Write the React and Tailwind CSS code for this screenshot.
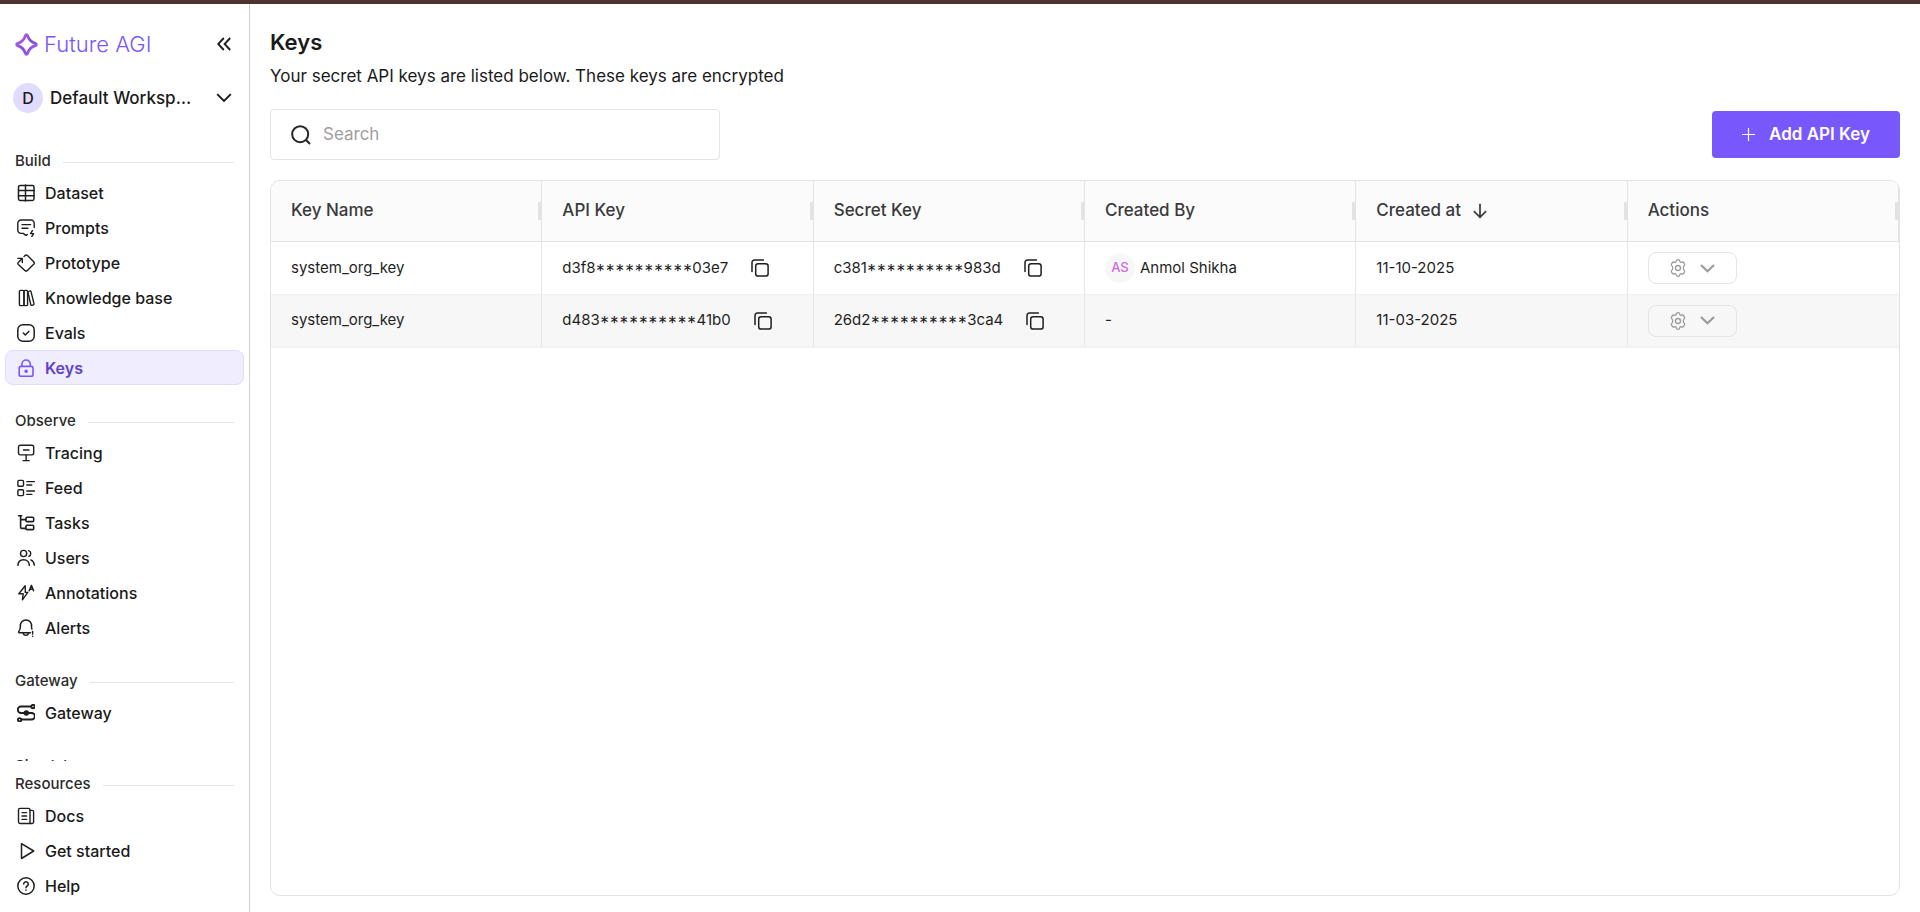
import { useState } from "react";

function Icon({ size = 18, stroke = 1.3, className = "", children }) {
  return (
    <svg
      aria-hidden="true"
      width={size}
      height={size}
      viewBox="0 0 18 18"
      fill="none"
      stroke="currentColor"
      strokeWidth={stroke}
      strokeLinecap="round"
      strokeLinejoin="round"
      className={`shrink-0 ${className}`}
    >
      {children}
    </svg>
  );
}

const icons = {
  dataset: (
    <Icon stroke={1.5}>
      <rect x="1.500" y="1.500" width="15.500" height="14.900" rx="1.600" />
      <path d="M8.500 .9v16M1.500 6.500H17M1.500 11.700H17" />
    </Icon>
  ),
  prompts: (
    <Icon stroke={1.400}>
      <path d="M17.2 8.5V4.2A3.2 3.2 0 0 0 14 1H4A3.2 3.2 0 0 0 .8 4.2v7A3.2 3.2 0 0 0 4 14.4h2.2l2.6 2 1.6-.8" />
      <path d="M5 5.6h8.6M5 9.2h6" />
      <path d="m15.4 11.6-1.8 3h3l-1.8 3" />
    </Icon>
  ),
  prototype: (
    <Icon stroke={1.400}>
      <path d="M7 2.600 8 1.500a1.800 1.800 0 0 1 2.500 0l6.200 6.300a1.800 1.800 0 0 1 0 2.500l-6.300 6.200a1.800 1.800 0 0 1-2.500 0L1.300 10.400a1.500 1.500 0 0 1 0-2L4.800 4.800" />
      <path d="M.9 4.400h4.400v4.200" />
    </Icon>
  ),
  knowledge: (
    <Icon stroke={1.400}>
      <rect x="2.400" y="1.400" width="4.600" height="15.200" rx="1.200" />
      <rect x="7" y="1.400" width="3.600" height="15.200" rx="1.200" />
      <path d="m10.900 3 1.800-1a.9.9 0 0 1 1.300.6l3 12.100a.9.9 0 0 1-.6 1.100l-1.400.5a.9.9 0 0 1-1.200-.7z" />
    </Icon>
  ),
  evals: (
    <Icon stroke={1.500}>
      <rect x="0.800" y="0.800" width="16.400" height="16.400" rx="5" />
      <path d="m6.300 9 2 2 3.500-3.600" />
    </Icon>
  ),
  keys: (
    <Icon stroke={1.600}>
      <rect x="2.200" y="7.400" width="13.800" height="9.800" rx="1.800" />
      <path d="M4.900 7.200V5.200a4.200 4.200 0 0 1 8.400 0v2" />
      <circle cx="9.100" cy="12.300" r="1" fill="currentColor" />
    </Icon>
  ),
  tracing: (
    <Icon stroke={1.400}>
      <rect x="1.500" y="1.300" width="15.200" height="9.600" rx="1.800" />
      <path d="M6.400 6h5.600M9.100 11.100v5.400M6 16.600h6.200" />
    </Icon>
  ),
  feed: (
    <Icon stroke={1.400}>
      <rect x="0.900" y="1.400" width="5.600" height="5.800" rx="1" />
      <rect x="0.900" y="10.800" width="5.600" height="5.800" rx="1" />
      <path d="M9.800 2.600h7.600M9.800 6h5M9.800 12h7.600M9.800 15.400h5" />
    </Icon>
  ),
  tasks: (
    <Icon stroke={1.600}>
      <path d="M1.500 1.800h3.200M3.600 1.800v11.400c0 .8.400 1.200 1.200 1.200h4M3.600 5.600h5.200" />
      <rect x="8.900" y="3.200" width="7.800" height="4.400" rx="1.200" />
      <rect x="8.900" y="11.200" width="7.800" height="4.400" rx="1.200" />
    </Icon>
  ),
  users: (
    <Icon stroke={1.400}>
      <circle cx="6.600" cy="4.500" r="3.100" />
      <path d="M.9 16.600c0-3.600 2.300-5.900 5.700-5.900s5.700 2.300 5.700 5.900" />
      <path d="M11.600 1.600a3 3 0 0 1 .2 5.700M13.800 10.900c2.100.8 3.300 2.800 3.500 5.200" />
    </Icon>
  ),
  annotations: (
    <Icon stroke={1.400}>
      <path d="M8.200 1.800 1.800 9.800h4.400l-.8 6 5.400-7.400H8.300z" />
      <path d="m12.200 6.800 2.200-5.400 2.200 5.400M13 5.300h2.800" strokeWidth="1.500" />
    </Icon>
  ),
  alerts: (
    <Icon stroke={1.500}>
      <path d="M13.400 13.800H2.600c-.8 0-1.100-.8-.7-1.400 1.100-1.500 1.500-2.700 1.500-5.200A5.500 5.500 0 0 1 9 1a5.500 5.500 0 0 1 5.500 6.200c0 1.300.1 2 .4 2.800" />
      <path d="M6.200 14.200a2.800 2.800 0 0 0 5.400 0M15.600 12.600v2.400M15.600 17.200v.100" />
    </Icon>
  ),
  gateway: (
    <Icon stroke={1.900}>
      <circle cx="16" cy="2.500" r="1.700" />
      <circle cx="2.600" cy="15.800" r="1.700" />
      <path d="M14.200 2.500H4a3.200 3.200 0 0 0 0 6.500h10.600a3.200 3.200 0 0 1 0 6.500H4.500" />
      <circle cx="9.300" cy="9" r="1.800" fill="currentColor" />
    </Icon>
  ),
  docs: (
    <Icon stroke={1.400}>
      <path d="M13 16.500H3.200a1.700 1.700 0 0 1-1.700-1.700V3a1.600 1.600 0 0 1 1.600-1.600h8.300A1.600 1.600 0 0 1 13 3z" />
      <path d="M13 3.400h2.200a1.400 1.400 0 0 1 1.400 1.400V15a1.500 1.500 0 0 1-1.500 1.500H13" />
      <path d="M5 5.600h4.600M5 9h4.600M5 12.400h4.600" />
    </Icon>
  ),
  start: (
    <Icon stroke={1.500}>
      <path d="M4.500 1.700v14.800L16.700 9z" />
    </Icon>
  ),
  help: (
    <Icon stroke={1.500}>
      <circle cx="9" cy="9" r="8.200" />
      <path d="M6.700 7a2.300 2.300 0 1 1 3.500 2c-.8.500-1.200.9-1.200 1.700M9 13.100v.100" />
    </Icon>
  ),
};

const sections = [
  {
    title: "Build",
    items: [
      ["Dataset", "dataset"],
      ["Prompts", "prompts"],
      ["Prototype", "prototype"],
      ["Knowledge base", "knowledge"],
      ["Evals", "evals"],
      ["Keys", "keys"],
    ],
  },
  {
    title: "Observe",
    items: [
      ["Tracing", "tracing"],
      ["Feed", "feed"],
      ["Tasks", "tasks"],
      ["Users", "users"],
      ["Annotations", "annotations"],
      ["Alerts", "alerts"],
    ],
  },
  { title: "Gateway", items: [["Gateway", "gateway"]] },
  { title: "Simulate", items: [] },
];

const resources = [
  ["Docs", "docs"],
  ["Get started", "start"],
  ["Help", "help"],
];

const rows = [
  {
    name: "system_org_key",
    api: "d3f8**********03e7",
    secret: "c381**********983d",
    by: "Anmol Shikha",
    initials: "AS",
    at: "11-10-2025",
  },
  {
    name: "system_org_key",
    api: "d483**********41b0",
    secret: "26d2**********3ca4",
    by: null,
    at: "11-03-2025",
  },
];

function SectionTitle({ children }) {
  return (
    <div className="flex items-center gap-3 px-[15px]">
      <h2 className="text-[15px] leading-[22px] font-medium text-[#2b2b2b]">{children}</h2>
      <span className="mt-0.5 h-px flex-1 bg-[#e4e4e6]" />
    </div>
  );
}

function NavItem({ label, icon, active }) {
  return (
    <li>
      <a
        href={`#${icon}`}
        aria-current={active ? "page" : undefined}
        className={`mx-[5px] flex h-[35px] items-center gap-2.5 rounded-lg border px-[11px] text-[16px] ${
          active
            ? "border-[#e1dbff] bg-[#f0edff] font-semibold text-[#5f43c8]"
            : "border-transparent font-medium text-[#1a1a1a]"
        }`}
      >
        <span className={active ? "flex text-[#7857fc]" : "flex text-[#1f1f1f]"}>{icons[icon]}</span>
        {label}
      </a>
    </li>
  );
}

function Sidebar() {
  return (
    <aside className="flex w-[250px] shrink-0 flex-col border-r border-[#cfcfd1]">
      <div className="flex items-center justify-between pt-6 pr-[18px] pl-[15px]">
        <a href="#home" className="flex items-center gap-1.5 text-[22px] leading-8 font-light text-[#7857fc]">
          <svg aria-hidden="true" width="23" height="23" viewBox="0 0 23 23" fill="none">
            <defs>
              <linearGradient id="spark" x1="0" y1="0" x2="1" y2="1">
                <stop offset="0" stopColor="#c56be0" />
                <stop offset="0.5" stopColor="#8448dc" />
                <stop offset="1" stopColor="#a566ea" />
              </linearGradient>
            </defs>
            <path
              d="M11.500 1.600c.5 0 .9.400 1.100 1 1.100 3.900 3.400 6.400 7.800 7.800 1.300.4 1.300 1.800 0 2.200-4.400 1.400-6.700 3.900-7.800 7.800-.2.600-.6 1-1.100 1s-.9-.4-1.100-1c-1.100-3.900-3.400-6.400-7.800-7.800-1.300-.4-1.300-1.800 0-2.200 4.400-1.400 6.700-3.900 7.800-7.800.2-.6.600-1 1.100-1z"
              stroke="url(#spark)"
              strokeWidth="2.800"
              strokeLinejoin="round"
            />
          </svg>
          Future AGI
        </a>
        <button type="button" aria-label="Collapse sidebar" className="text-[#1f1f1f]">
          <svg aria-hidden="true" width="14" height="14" viewBox="0 0 14 14" fill="none" stroke="currentColor" strokeWidth="1.900">
            <path d="M6.800 1 1.200 7l5.600 6M13.200 1 7.600 7l5.600 6" />
          </svg>
        </button>
      </div>

      <button
        type="button"
        className="mt-[23px] flex items-center gap-[7px] pr-[17px] pl-[13px] text-left text-[#1a1a1a]"
      >
        <span className="flex size-[30px] items-center justify-center rounded-full bg-[#e1dbff] text-[16px] font-medium">
          D
        </span>
        <span className="w-[147px] truncate text-[17px] leading-6 font-medium">Default Workspace</span>
        <svg
          aria-hidden="true"
          width="16"
          height="10"
          viewBox="0 0 16 10"
          fill="none"
          stroke="currentColor"
          strokeWidth="1.900"
          className="ml-auto"
        >
          <path d="m1.200 1.200 6.800 6.800 6.800-6.800" />
        </svg>
      </button>

      <nav aria-label="Main" className="mt-3 min-h-0 flex-1 overflow-y-auto [scrollbar-width:none]">
        {sections.map((s) => (
          <section key={s.title}>
            <div className="pt-[25px] pb-[3px]">
              <SectionTitle>{s.title}</SectionTitle>
            </div>
            <ul>
              {s.items.map(([label, icon]) => (
                <NavItem key={label} label={label} icon={icon} active={icon === "keys"} />
              ))}
            </ul>
          </section>
        ))}
      </nav>

      <nav aria-label="Resources" className="shrink-0 pt-3 pb-[9px]">
        <div className="pb-[3px]">
          <SectionTitle>Resources</SectionTitle>
        </div>
        <ul>
          {resources.map(([label, icon]) => (
            <NavItem key={label} label={label} icon={icon} />
          ))}
        </ul>
      </nav>
    </aside>
  );
}

function HeaderCell({ children }) {
  return (
    <th
      scope="col"
      className="relative h-[61px] border-r border-b border-[#e2e3e5] bg-[#fbfbfb] px-5 text-left text-[17px] font-medium text-[#3a3a3c]"
    >
      <span className="flex items-center gap-3">{children}</span>
      <span className="absolute top-[21px] right-0 h-[18px] w-[3px] bg-[#e2e3e5]" />
    </th>
  );
}

function SecretValue({ value, label }) {
  return (
    <div className="flex items-center gap-[23px]">
      <span className="[font-feature-settings:'case']">{value}</span>
      <button type="button" aria-label={label} className="text-[#1f1f1f]">
        <Icon stroke={1.500}>
          <rect x="4.700" y="4.700" width="12.400" height="12.400" rx="2.400" />
          <path d="M1 12.500V3.400A2.400 2.400 0 0 1 3.400 1h9" />
        </Icon>
      </button>
    </div>
  );
}

function KeysTable() {
  const cell =
    "h-[53px] border-r border-b border-[#e6e6e8] border-b-[#f1f1f2] px-5 last:border-r-0 group-last:border-b-2";
  return (
    <table className="w-full table-fixed border-separate border-spacing-0 text-[15px] text-[#1f1f1f]">
      <thead>
        <tr>
          <HeaderCell>Key Name</HeaderCell>
          <HeaderCell>API Key</HeaderCell>
          <HeaderCell>Secret Key</HeaderCell>
          <HeaderCell>Created By</HeaderCell>
          <HeaderCell>
            Created at
            <svg aria-hidden="true" width="14" height="16" viewBox="0 0 14 16" fill="none" stroke="currentColor" strokeWidth="1.700">
              <path d="M7 .8V14M.9 8.200 7 14.300l6.100-6.100" />
            </svg>
          </HeaderCell>
          <HeaderCell>Actions</HeaderCell>
        </tr>
      </thead>
      <tbody>
        {rows.map((r) => (
          <tr key={r.api} className="group even:bg-[#f7f7f7]">
            <td className={cell}>{r.name}</td>
            <td className={cell}>
              <SecretValue value={r.api} label="Copy API key" />
            </td>
            <td className={cell}>
              <SecretValue value={r.secret} label="Copy secret key" />
            </td>
            <td className={cell}>
              {r.by ? (
                <div className="flex items-center gap-[5px]">
                  <span className="flex size-[30px] items-center justify-center rounded-full bg-[#f7f7f8] text-[13px] font-medium text-[#cf6be8]">
                    {r.initials}
                  </span>
                  {r.by}
                </div>
              ) : (
                "-"
              )}
            </td>
            <td className={cell}>{r.at}</td>
            <td className={cell}>
              <button
                type="button"
                aria-label="Key actions"
                className="flex h-8 w-[89px] items-center justify-center gap-[13px] rounded-lg border border-[#e4e4e8] text-[#9b9b9e]"
              >
                <Icon stroke={1.300}>
                  <path d="M9 .7c1 0 1.700.7 1.800 1.600.1.700.9 1.200 1.600.9.900-.4 1.900-.1 2.400.7l.6 1c.5.900.2 1.900-.6 2.400-.6.400-.6 3 0 3.400.8.500 1.100 1.500.6 2.400l-.6 1c-.5.800-1.500 1.100-2.400.7-.7-.3-1.500.2-1.600.9-.1.900-.8 1.600-1.800 1.600s-1.700-.7-1.800-1.600c-.1-.7-.9-1.200-1.600-.9-.9.400-1.900.1-2.400-.7l-.6-1c-.5-.9-.2-1.900.6-2.400.6-.4.600-3 0-3.400-.8-.5-1.100-1.500-.6-2.400l.6-1c.5-.8 1.500-1.100 2.400-.7.7.3 1.500-.2 1.600-.9C7.300 1.400 8 .7 9 .7z" />
                  <circle cx="9" cy="9" r="2.500" />
                </Icon>
                <svg aria-hidden="true" width="15" height="9" viewBox="0 0 15 9" fill="none" stroke="currentColor" strokeWidth="2.200">
                  <path d="m1 1 6.500 6.300L14 1" />
                </svg>
              </button>
            </td>
          </tr>
        ))}
      </tbody>
    </table>
  );
}

export default function App() {
  const [query, setQuery] = useState("");
  return (
    <div className="flex h-screen flex-col bg-white font-['Inter',sans-serif] text-[#1a1a1a]">
      <div className="h-1 shrink-0 bg-[#503331]" />
      <div className="flex min-h-0 flex-1">
        <Sidebar />
        <main className="flex min-w-0 flex-1 flex-col px-5 pt-5 pb-4">
          <h1 className="text-[22px] leading-9 font-semibold">Keys</h1>
          <p className="text-[17px] leading-8">
            Your secret API keys are listed below. These keys are encrypted
          </p>
          <div className="mt-[17px] flex items-center justify-between">
            <label className="flex h-[51px] w-[450px] items-center gap-3 rounded border border-[#e4e4e8] px-5">
              <svg aria-hidden="true" width="20" height="20" viewBox="0 0 20 20" fill="none" stroke="#262626" strokeWidth="2">
                <circle cx="9.200" cy="9.200" r="8" />
                <path d="m14.800 14.800 4.200 4.200" />
              </svg>
              <input
                type="search"
                aria-label="Search"
                value={query}
                onChange={(e) => setQuery(e.target.value)}
                placeholder="Search"
                className="min-w-0 flex-1 bg-transparent text-[17px] outline-none placeholder:text-[#9e9ea1]"
              />
            </label>
            <button
              type="button"
              className="flex h-[47px] items-center gap-[14px] rounded bg-[#7857fc] px-[30px] text-[17px] font-semibold text-white"
            >
              <svg aria-hidden="true" width="13" height="13" viewBox="0 0 13 13" fill="none" stroke="currentColor" strokeWidth="1.200">
                <path d="M6.500 0v13M0 6.500h13" />
              </svg>
              Add API Key
            </button>
          </div>
          <div className="mt-5 min-h-0 flex-1 overflow-hidden rounded-[10px] border border-[#e2e3e5]">
            <KeysTable />
          </div>
        </main>
      </div>
    </div>
  );
}
